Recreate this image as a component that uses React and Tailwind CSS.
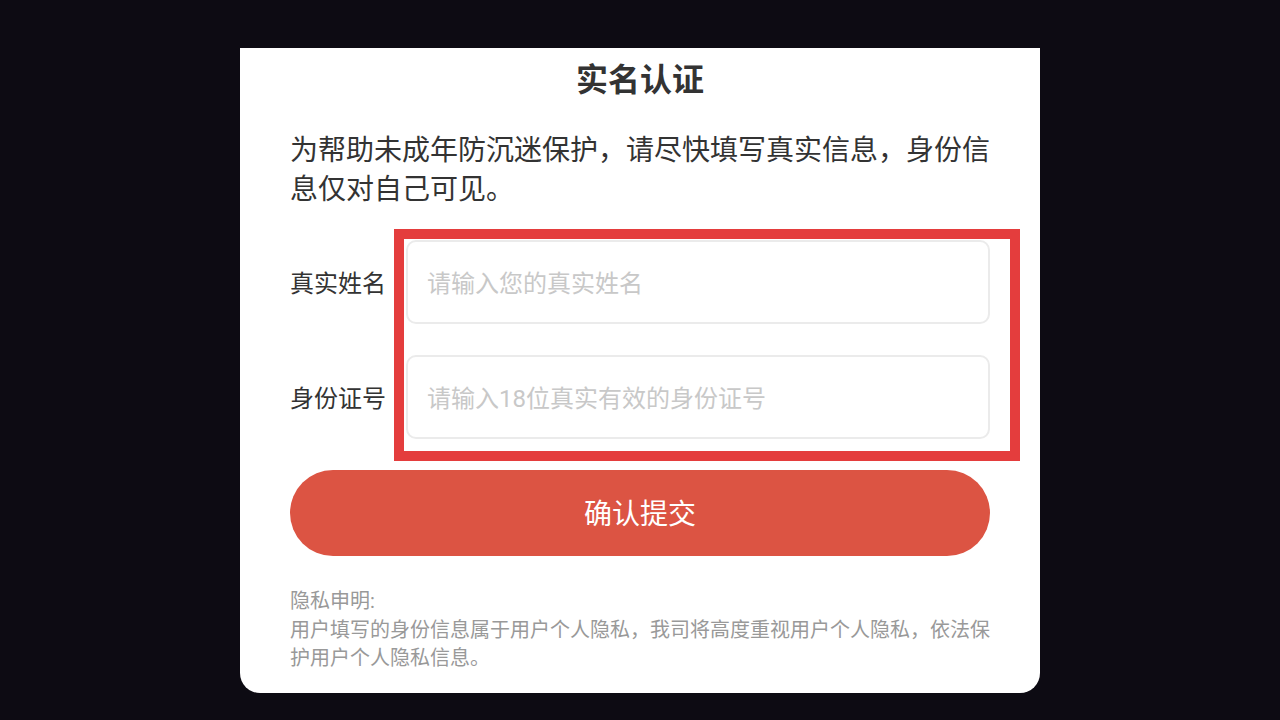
const font = { fontFamily: 'Roboto, "Noto Sans CJK SC", sans-serif' }

const Field = ({ label, placeholder }) => (
  <div className="flex items-center">
    <span className="w-[96px] shrink-0 pt-[4px] text-[24px] text-[#333333] leading-none">{label}</span>
    <div className="ml-[20px] flex h-[84px] flex-1 items-center rounded-[10px] border-2 border-[#ebebeb] bg-white pl-[19px] pr-[20px] pt-[4px]">
      <span className="text-[24px] text-[#c8c8c8] leading-none">{placeholder}</span>
    </div>
  </div>
)

export default function App() {
  return (
    <div className="min-h-[720px] w-full bg-[#0d0b13]" style={font}>
      <div className="pt-[48px]">
        <div className="mx-auto w-[800px] rounded-b-[20px] bg-white px-[50px] pt-[12px] pb-[20px]">
          <h1 className="text-center text-[32px] font-bold leading-[40px] text-[#333333]">实名认证</h1>

          <p className="mt-[31px] text-[28px] leading-[39px] text-[#333333]">
            为帮助未成年防沉迷保护，请尽快填写真实信息，身份信息仅对自己可见。
          </p>

          <div className="relative mt-[31px] flex flex-col gap-[31px]">
            <Field label="真实姓名" placeholder="请输入您的真实姓名" />
            <Field label="身份证号" placeholder="请输入18位真实有效的身份证号" />
            {/* annotation frame */}
            <div className="pointer-events-none absolute top-[-11px] bottom-[-22px] left-[104px] right-[-30px] border-[10px] border-[#e43d3d]" />
          </div>

          <button className="mt-[31px] flex h-[86px] w-full items-center justify-center rounded-full bg-[#dc5443] pt-[4px] text-[28px] text-white">
            确认提交
          </button>

          <div className="mt-[31px] text-[20px] leading-[28.5px] text-[#999999]">
            <p>隐私申明:</p>
            <p>用户填写的身份信息属于用户个人隐私，我司将高度重视用户个人隐私，依法保护用户个人隐私信息。</p>
          </div>
        </div>
      </div>
    </div>
  )
}
